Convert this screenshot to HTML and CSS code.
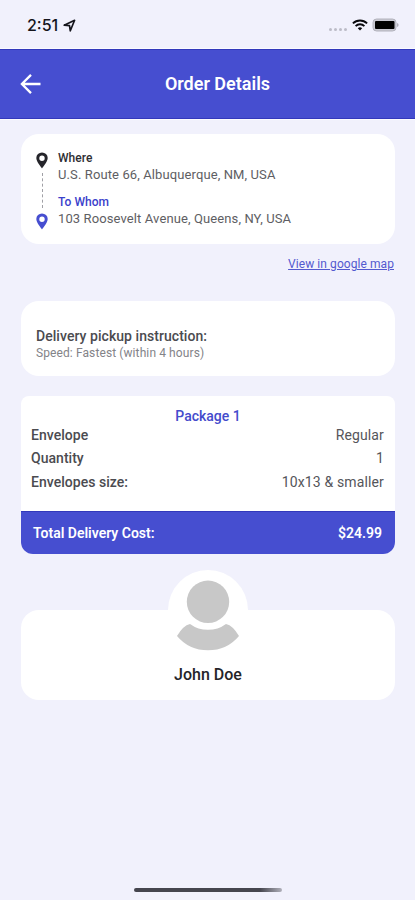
FILE: index.html
```html
<!DOCTYPE html>
<html lang="en">
<head>
<meta charset="utf-8">
<title>Order Details</title>
<link rel="stylesheet" href="styles.css">
</head>
<body>
<div class="status">
  <div class="clock"><span>2:51</span>
    <svg width="13" height="13" viewBox="0 0 13 13"><path d="M1.2 6.2 11.6 1.3 7.3 11.8 6.5 6.7Z" fill="none" stroke="#15151c" stroke-width="1.7" stroke-linejoin="round"/></svg>
  </div>
  <div class="signals">
    <span class="dots"><i></i><i></i><i></i><i></i></span>
    <svg width="16" height="12" viewBox="0 0 16 12" fill="none" stroke="#08080c" stroke-width="1.9"><path d="M.9 4.4a10.2 10.2 0 0 1 14.2 0M3.6 7.1a6.3 6.3 0 0 1 8.8 0"/><path d="M8 11.4 5.8 9.3a3.2 3.2 0 0 1 4.4 0Z" fill="#08080c" stroke="none"/></svg>
    <svg class="battery" width="27" height="14" viewBox="0 0 27 14"><rect x="1" y="1" width="23" height="12" rx="3.5" fill="#c9c9d2" stroke="#b2b2bc"/><rect x="3" y="3" width="19.500" height="8" rx="1" fill="#000"/><path d="M25.2 5v4q1.3-.6 1.3-2t-1.3-2" fill="#a2a2ac"/></svg>
  </div>
</div>
<header class="header">
  <svg class="back" width="22" height="22" viewBox="0 0 22 22"><path d="M20.500 11H2M11 1.900 1.900 11l9.100 9.100" fill="none" stroke="#fff" stroke-width="2.3"/></svg>
  <h1>Order Details</h1>
</header>
<main>
  <section class="card route">
    <div class="rail">
      <svg class="pin" width="12" height="17" viewBox="0 0 12 17"><path fill-rule="evenodd" d="M6 .4A5.7 5.7 0 0 0 .3 6.1C.3 10 6 16.4 6 16.4S11.7 10 11.7 6.1A5.7 5.7 0 0 0 6 .4ZM6 3.500a2.700 2.700 0 1 1 0 5.400 2.700 2.700 0 0 1 0-5.400Z"/></svg>
      <span class="dash"></span>
      <svg class="pin blue" width="12" height="17" viewBox="0 0 12 17"><path fill-rule="evenodd" d="M6 .4A5.7 5.7 0 0 0 .3 6.1C.3 10 6 16.4 6 16.4S11.7 10 11.7 6.1A5.7 5.7 0 0 0 6 .4ZM6 3.500a2.700 2.700 0 1 1 0 5.400 2.700 2.700 0 0 1 0-5.400Z"/></svg>
    </div>
    <div class="stops">
      <div class="label">Where</div>
      <div class="address">U.S. Route 66, Albuquerque, NM, USA</div>
      <div class="label whom">To Whom</div>
      <div class="address">103 Roosevelt Avenue, Queens, NY, USA</div>
    </div>
  </section>
  <div class="map"><a>View in google map</a></div>
  <section class="card pickup">
    <div class="pickup-title">Delivery pickup instruction:</div>
    <div class="speed">Speed: Fastest (within 4 hours)</div>
  </section>
  <section class="card package">
    <h2>Package 1</h2>
    <div class="row"><span>Envelope</span><span class="value">Regular</span></div>
    <div class="row"><span>Quantity</span><span class="value">1</span></div>
    <div class="row"><span>Envelopes size:</span><span class="value">10x13 &amp; smaller</span></div>
    <div class="total"><span>Total Delivery Cost:</span><span>$24.99</span></div>
  </section>
  <section class="card person">
    <div class="avatar"><svg width="80" height="80" viewBox="0 0 80 80" fill="#c8c8c8"><circle cx="40" cy="31.800" r="21.200"/><path d="M22 53.900Q30 59.800 40 59.800t18-5.900Q65 55.500 71 66 59 80.300 40 80.300T9 66Q15 55.500 22 53.900Z"/></svg></div>
    <div class="name">John Doe</div>
  </section>
</main>
<div class="home"></div>
</body>
</html>
```
FILE: styles.css
```css
* { box-sizing: border-box; }
body {
  margin: 0;
  height: 900px;
  display: flex;
  flex-direction: column;
  overflow: hidden;
  background: #f1f1fc;
  color: #2e2e33;
  font-family: Roboto, "Liberation Sans", sans-serif;
  white-space: nowrap;
}
.status {
  height: 49px;
  padding: 2px 16px 0 27px;
  display: flex;
  align-items: center;
  justify-content: space-between;
  border-bottom: 1px solid #fafaff;
}
.clock {
  display: flex;
  align-items: center;
  gap: 5px;
  font: 500 16px/20px Inter, sans-serif;
  color: #15151c;
}
.signals { display: flex; align-items: center; gap: 5px; }
.dots { display: flex; gap: 2px; padding-top: 8px; }
.dots i { width: 3px; height: 3px; border-radius: 50%; background: #bcbcc7; }
.battery { margin-left: -1px; }
.header {
  height: 70px;
  display: grid;
  grid-template-columns: 53px 1fr 34px;
  align-items: center;
  background: #464ed0;
  border-top: 1px solid #3238bb;
  border-bottom: 1px solid #3238bb;
}
.back { margin-left: 20px; }
.header h1 {
  margin: 0 0 0 1px;
  text-align: center;
  color: #fff;
  font-size: 18px;
  font-weight: 600;
  line-height: 24px;
}
main { flex: 1; padding: 14px 20px 0 21px; border-top: 1px solid #fafaff; }
.card { background: #fff; border-radius: 18px; }
.route { height: 110px; display: flex; padding: 16px 15px 10px; }
.rail { width: 12px; display: flex; flex-direction: column; align-items: center; padding-top: 2px; }
.pin { fill: #25252b; flex: none; }
.pin.blue { fill: #464ed0; }
.dash { flex: none; height: 35px; margin: 4px 0 5px; border-left: 1px dashed #a0a0a6; }
.stops { margin-left: 10px; }
.label { font-size: 12px; font-weight: 500; line-height: 16px; letter-spacing: .03px; }
.label.whom { color: #3a41cb; margin-top: 10px; }
.address { font-size: 13px; line-height: 18px; letter-spacing: .11px; color: #5e5e63; }
.map { height: 57px; padding: 12px 1px 0 0; text-align: right; font-size: 12px; line-height: 17px; letter-spacing: .07px; }
.map a { color: #5359cf; text-decoration: underline; }
.pickup { height: 75px; padding: 26px 15px 0; }
.pickup-title { font-size: 14px; font-weight: 500; line-height: 18px; letter-spacing: .05px; color: #4b4b50; }
.speed { font-size: 12px; line-height: 16px; letter-spacing: .1px; color: #838388; }
.package { height: 158px; margin-top: 20px; padding-top: 11px; border-radius: 8px 8px 12px 12px; overflow: hidden; }
.package h2 { margin: 0; text-align: center; font-size: 14px; font-weight: 500; line-height: 18px; color: #444bcc; }
.row { height: 23.5px; padding: 0 11px 0 10px; display: flex; justify-content: space-between; align-items: center; font-size: 14px; font-weight: 500; letter-spacing: .03px; color: #4b4b50; }
.row:nth-of-type(1) { margin-top: -2px; }
.value { font-weight: 400; letter-spacing: .14px; color: #55555a; }
.total {
  height: 43px;
  margin-top: 17px;
  padding: 0 13px 0 12px;
  display: flex;
  justify-content: space-between;
  align-items: center;
  color: #fff;
  background: #464ed0;
  border-top: 1px solid #3238bb;
  font-size: 14px;
  font-weight: 600;
}
.person { height: 90px; margin-top: 56px; display: flex; flex-direction: column; align-items: center; }
.avatar { width: 80px; height: 80px; margin-top: -40px; border-radius: 50%; background: #fff; }
.avatar svg { display: block; overflow: visible; }
.name { margin-top: 15px; font-size: 16px; font-weight: 500; line-height: 20px; color: #242428; }
.home { width: 148px; height: 4px; margin: 0 auto 8px; border-radius: 2px; background: linear-gradient(90deg, #45454e 85%, #b0b0ba); }
```
